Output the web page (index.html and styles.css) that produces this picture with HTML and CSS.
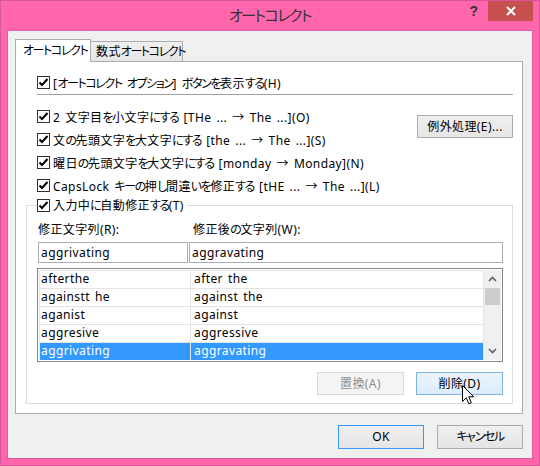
FILE: index.html
```html
<!DOCTYPE html>
<html lang="ja">
<head>
<meta charset="utf-8">
<title>オートコレクト</title>
<link rel="stylesheet" href="styles.css">
</head>
<body>
<div class="window">
  <div class="titlebar">
    <div class="title"><span class="k">オートコレクト</span></div>
    <div class="help">?</div>
    <div class="close">
      <svg width="10" height="10" viewBox="0 0 10 10"><path d="M1 1 L9 9 M9 1 L1 9" stroke="#fff" stroke-width="2" fill="none"/></svg>
    </div>
  </div>
  <div class="client">
    <div class="tabs">
      <div class="tab tab-active"><span class="k">オートコレクト</span></div>
      <div class="tab tab-inactive">数式<span class="k">オートコレクト</span></div>
    </div>
    <div class="panel">
      <div class="top">
        <div class="check-row">
          <svg class="cb" width="13" height="13" viewBox="0 0 13 13"><rect x="0.5" y="0.5" width="12" height="12" fill="#fff" stroke="#333"/><path d="M2.5 6.5 L5 9 L10.5 3" stroke="#000" stroke-width="2" fill="none"/></svg>
          <span>[<span class="k">オートコレクト</span> <span class="k">オプション</span>] <span class="k">ボタンを</span>表示<span class="k">する</span>(H)</span>
        </div>
        <div class="sep"></div>
        <div class="opts">
          <div class="opt-col">
            <div class="check-row">
              <svg class="cb" width="13" height="13" viewBox="0 0 13 13"><rect x="0.5" y="0.5" width="12" height="12" fill="#fff" stroke="#333"/><path d="M2.5 6.5 L5 9 L10.5 3" stroke="#000" stroke-width="2" fill="none"/></svg>
              <span>2 文字目<span class="k">を</span>小文字<span class="k">にする</span> [THe ... → The ...](O)</span>
            </div>
            <div class="check-row">
              <svg class="cb" width="13" height="13" viewBox="0 0 13 13"><rect x="0.5" y="0.5" width="12" height="12" fill="#fff" stroke="#333"/><path d="M2.5 6.5 L5 9 L10.5 3" stroke="#000" stroke-width="2" fill="none"/></svg>
              <span>文<span class="k">の</span>先頭文字<span class="k">を</span>大文字<span class="k">にする</span> [the ... → The ...](S)</span>
            </div>
            <div class="check-row">
              <svg class="cb" width="13" height="13" viewBox="0 0 13 13"><rect x="0.5" y="0.5" width="12" height="12" fill="#fff" stroke="#333"/><path d="M2.5 6.5 L5 9 L10.5 3" stroke="#000" stroke-width="2" fill="none"/></svg>
              <span>曜日<span class="k">の</span>先頭文字<span class="k">を</span>大文字<span class="k">にする</span> [monday → Monday](N)</span>
            </div>
            <div class="check-row">
              <svg class="cb" width="13" height="13" viewBox="0 0 13 13"><rect x="0.5" y="0.5" width="12" height="12" fill="#fff" stroke="#333"/><path d="M2.5 6.5 L5 9 L10.5 3" stroke="#000" stroke-width="2" fill="none"/></svg>
              <span>CapsLock <span class="k">キーの</span>押<span class="k">し</span>間違<span class="k">いを</span>修正<span class="k">する</span> [tHE ... → The ...](L)</span>
            </div>
          </div>
          <div class="btn btn-except">例外処理(E)...</div>
        </div>
      </div>
      <div class="group">
        <div class="legend">
          <svg class="cb" width="13" height="13" viewBox="0 0 13 13"><rect x="0.5" y="0.5" width="12" height="12" fill="#fff" stroke="#333"/><path d="M2.5 6.5 L5 9 L10.5 3" stroke="#000" stroke-width="2" fill="none"/></svg>
          <span>入力中<span class="k">に</span>自動修正<span class="k">する</span>(T)</span>
        </div>
        <div class="labels">
          <div class="lbl lbl-left">修正文字列(R):</div>
          <div class="lbl lbl-right">修正後<span class="k">の</span>文字列(W):</div>
        </div>
        <div class="inputs">
          <div class="input input-left">aggrivating</div>
          <div class="input input-right">aggravating</div>
        </div>
        <div class="list">
          <div class="rows">
            <div class="row"><div class="cell c1">afterthe</div><div class="cell c2">after the</div></div>
            <div class="row"><div class="cell c1">againstt he</div><div class="cell c2">against the</div></div>
            <div class="row"><div class="cell c1">aganist</div><div class="cell c2">against</div></div>
            <div class="row"><div class="cell c1">aggresive</div><div class="cell c2">aggressive</div></div>
            <div class="row selected"><div class="cell c1">aggrivating</div><div class="cell c2">aggravating</div></div>
          </div>
          <div class="scrollbar">
            <div class="arrow"><svg width="9" height="6" viewBox="0 0 9 6"><path d="M1 5 L4.5 1.5 L8 5" stroke="#606060" stroke-width="1.6" fill="none"/></svg></div>
            <div class="thumb"></div>
            <div class="track"></div>
            <div class="arrow"><svg width="9" height="6" viewBox="0 0 9 6"><path d="M1 1 L4.5 4.5 L8 1" stroke="#606060" stroke-width="1.6" fill="none"/></svg></div>
          </div>
        </div>
        <div class="group-buttons">
          <div class="btn btn-disabled">置換(A)</div>
          <div class="btn btn-hover">削除(D)</div>
        </div>
      </div>
    </div>
    <div class="footer">
      <div class="btn btn-default">OK</div>
      <div class="btn btn-footer"><span class="k">キャンセル</span></div>
    </div>
  </div>
</div>
<svg class="cursor" width="13" height="21" viewBox="0 0 13 21"><path d="M0.5 0.5 L0.5 16.5 L4.3 12.8 L6.8 18.8 L9.3 17.8 L6.8 11.8 L11.8 11.8 Z" fill="#fff" stroke="#000" stroke-width="1" stroke-linejoin="miter"/></svg>
</body>
</html>
```
FILE: styles.css
```css
html, body {
  margin: 0;
  padding: 0;
}
body {
  width: 540px;
  height: 466px;
  background: #FF66AB;
  font-family: "Noto Sans", "Noto Sans CJK JP", sans-serif;
  font-size: 12px;
  letter-spacing: 0.4px;
  word-spacing: 1.5px;
  color: #000;
  font-feature-settings: "palt";
  position: relative;
  overflow: hidden;
}
.k {
  letter-spacing: -1.4px;
}
.window {
  width: 540px;
  height: 466px;
  box-shadow: inset 0 0 0 1px #D9559A;
}
.titlebar {
  height: 31px;
  display: flex;
}
.title {
  flex: 1;
  padding-left: 72px;
  text-align: center;
  line-height: 31px;
  font-size: 15px;
  color: #333;
}
.title .k {
  letter-spacing: -1.5px;
}
.help {
  width: 12px;
  padding-right: 8px;
  height: 22px;
  line-height: 22px;
  text-align: center;
  font-family: "Liberation Sans", sans-serif;
  font-weight: bold;
  font-size: 14px;
  color: #333;
}
.close {
  width: 45px;
  height: 20px;
  margin-top: 1px;
  margin-right: 7px;
  background: #C75050;
  display: flex;
  align-items: center;
  justify-content: center;
}
.client {
  margin: 0 8px;
  height: 427px;
  box-sizing: border-box;
  background: #F0F0F0;
  padding: 8px 9px 0 7px;
  box-shadow: 0 0 0 1px #E65AA2;
}
.tabs {
  display: flex;
  align-items: flex-end;
  height: 22px;
}
.tab {
  box-sizing: border-box;
  border: 1px solid #ACACAC;
  border-bottom: none;
  white-space: nowrap;
}
.tab-active {
  width: 76px;
  height: 23px;
  margin-bottom: -1px;
  background: #fff;
  padding-left: 7px;
  line-height: 21px;
  position: relative;
  z-index: 1;
}
.tab-inactive {
  width: 93px;
  height: 20px;
  margin-left: -1px;
  padding-left: 5px;
  line-height: 19px;
  background: linear-gradient(#F0F0F0, #E5E5E5);
}
.panel {
  height: 353px;
  box-sizing: border-box;
  border: 1px solid #ACACAC;
  background: #fff;
  padding: 9px 9px 0 10px;
}
.top {
  padding-left: 11px;
}
.check-row {
  display: flex;
  align-items: center;
  height: 23px;
  gap: 3px;
  white-space: nowrap;
}
.cb {
  flex: none;
  display: block;
}
.sep {
  border-top: 1px solid #A0A0A0;
}
.opts {
  display: flex;
  margin-top: 10px;
}
.opt-col {
  flex: 1;
}
.btn {
  box-sizing: border-box;
  border: 1px solid #ACACAC;
  background: linear-gradient(#F0F0F0, #E5E5E5);
  text-align: center;
  white-space: nowrap;
}
.btn-except {
  width: 96px;
  height: 23px;
  line-height: 21px;
  margin-top: 10px;
}
.group {
  margin-top: 8px;
  height: 199px;
  box-sizing: border-box;
  border: 1px solid #DCDCDC;
  padding: 0 9px 0 11px;
}
.legend {
  display: flex;
  align-items: center;
  gap: 3px;
  width: max-content;
  height: 16px;
  margin-top: -9px;
  margin-left: -1px;
  padding-right: 3px;
  background: #fff;
}
.labels {
  display: flex;
  margin-top: 9px;
  height: 16px;
  line-height: 16px;
}
.lbl-left {
  width: 151px;
}
.lbl-right {
  padding-left: 4px;
}
.inputs {
  display: flex;
  gap: 1px;
  margin-top: 4px;
}
.input {
  box-sizing: border-box;
  height: 21px;
  line-height: 19px;
  border: 1px solid #ABADB3;
  padding-left: 2px;
}
.input-left {
  width: 150px;
}
.input-right {
  width: 314px;
}
.list {
  margin-top: 5px;
  margin-left: -1px;
  width: 466px;
  height: 94px;
  box-sizing: border-box;
  border: 1px solid #828790;
  padding: 1px;
  display: flex;
}
.rows {
  width: 445px;
}
.row {
  display: flex;
  height: 18px;
  box-sizing: border-box;
  border-top: 1px solid #E3E3E3;
}
.cell {
  box-sizing: border-box;
  height: 17px;
  line-height: 16px;
  border-left: 1px solid #E3E3E3;
  white-space: nowrap;
}
.c1 {
  width: 151px;
  padding-left: 1px;
}
.c2 {
  width: 294px;
  padding-left: 3px;
  border-right: 1px solid #E3E3E3;
}
.selected .cell {
  background: #3399FF;
  color: #fff;
}
.scrollbar {
  width: 17px;
  background: #F0F0F0;
  display: flex;
  flex-direction: column;
}
.arrow {
  height: 18px;
  display: flex;
  align-items: center;
  justify-content: center;
}
.thumb {
  height: 17px;
  margin: 0 1px;
  background: #CDCDCD;
}
.track {
  flex: 1;
}
.group-buttons {
  display: flex;
  justify-content: flex-end;
  gap: 12px;
  margin-top: 10px;
}
.group-buttons .btn {
  width: 87px;
  height: 23px;
  line-height: 21px;
}
.btn-disabled {
  background: #F4F4F4;
  border-color: #D9D9D9;
  color: #8D8D8D;
}
.btn-hover {
  background: linear-gradient(#ECF4FC, #DCECFC);
  border-color: #7EB4EA;
}
.footer {
  display: flex;
  justify-content: flex-end;
  gap: 13px;
  margin-top: 11px;
}
.footer .btn {
  width: 86px;
  height: 24px;
  line-height: 22px;
}
.btn-default {
  border-color: #3399FF;
}
.cursor {
  position: absolute;
  left: 462px;
  top: 385px;
}
```
